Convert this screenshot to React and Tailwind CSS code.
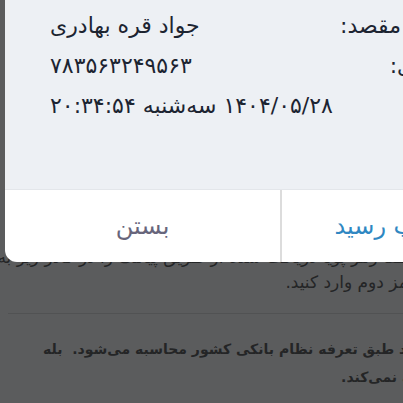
export default function App() {
  const font = { fontFamily: '"DejaVu Sans", "Noto Sans", sans-serif' };
  return (
    <div className="relative w-[403px] h-[403px] overflow-hidden bg-[#5b5c5d]" style={font}>
      {/* dimmed page behind the dialog */}
      <div dir="rtl" className="w-[520px] pt-[245px] text-[#242526]">
        <div className="pr-[104px] whitespace-nowrap text-[17px] leading-[25px]">
          لطفا رمز پویا دریافت شده از طریق پیامک را در کادر زیر به جای
        </div>
        <div className="pr-[104px] whitespace-nowrap text-[17px] leading-[25px]">
          رمز دوم وارد کنید.
        </div>
        <div className="mt-[18px] ml-[8px] border-t border-[#515253]" />
        <div className="pr-[75px] mt-[21px] whitespace-nowrap text-[14px] leading-[28px] font-bold">
          کارمزد طبق تعرفه نظام بانکی کشور محاسبه می‌شود.&nbsp; بله
        </div>
        <div className="pr-[34px] whitespace-nowrap text-[14px] leading-[28px] font-bold">
          هزینه اضافه نمی‌کند.
        </div>
      </div>

      {/* dialog */}
      <div className="absolute left-[5px] top-[-20px] w-[552px] rounded-[12px] overflow-hidden bg-white">
        <div dir="rtl" className="bg-[#edf0f4] pt-[25px] pb-[64px] pr-[55px] pl-[45px] text-[#1c2431] text-[22px]">
          <div className="flex justify-between items-center h-[40px]">
            <span>نام حساب مقصد:</span>
            <span>جواد قره بهادری</span>
          </div>
          <div className="flex justify-between items-center h-[40px]">
            <span className="pr-[15px]">کد پیگیری:</span>
            <span>۷۸۳۵۶۳۲۴۹۵۶۳</span>
          </div>
          <div className="flex justify-between items-center h-[40px]">
            <span>تاریخ:</span>
            <span>۱۴۰۴/۰۵/۲۸ سه‌شنبه ۲۰:۳۴:۵۴</span>
          </div>
        </div>
        <div className="flex h-[73px] border-t border-[#e3e6ea]">
          <div className="flex-1 flex items-center justify-center text-[24px] text-[#67657b]" dir="rtl">
            بستن
          </div>
          <div className="w-[2px] bg-[#dcdcdc]" />
          <div className="flex-1 flex items-center justify-center text-[24px] text-[#2f87c2]" dir="rtl">
            ذخیره چاپ رسید
          </div>
        </div>
      </div>
    </div>
  );
}
